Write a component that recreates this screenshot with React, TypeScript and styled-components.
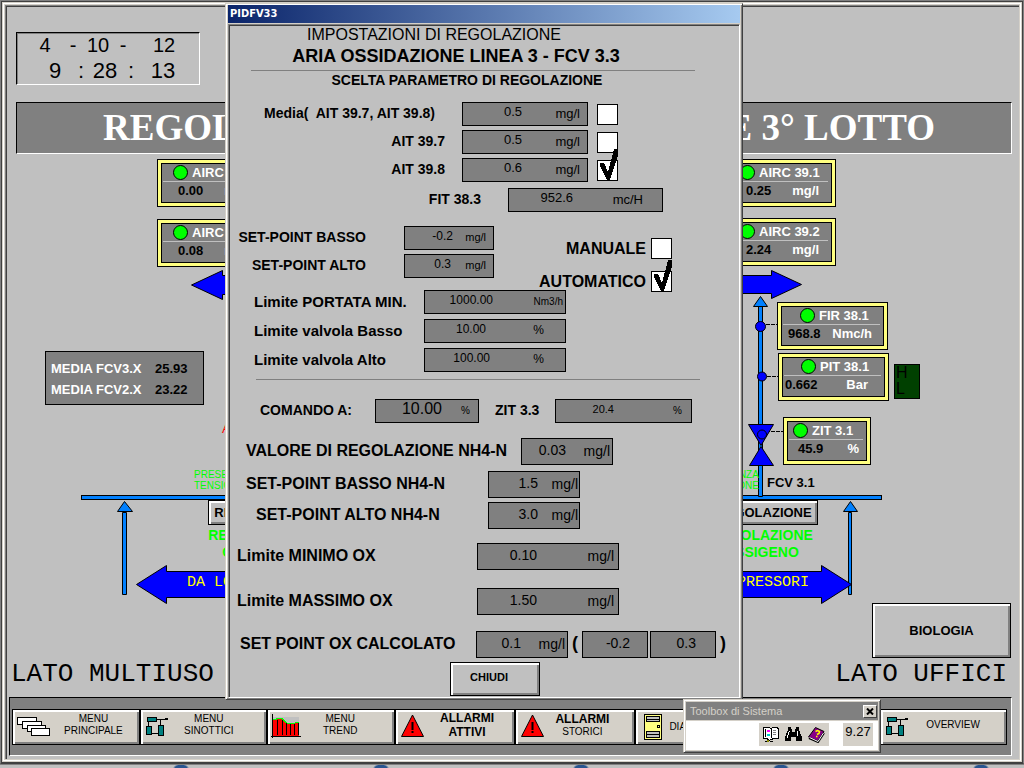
import React, { useId } from "react";
import styled, { createGlobalStyle, css } from "styled-components";

const face = "#c0c0c0";
const panel = "#808080";
const chrome = "#d4d0c8";
const dark = "#404040";
const pipe = "#0080ff";
const lime = "#00ff00";

const GlobalStyle = createGlobalStyle`
  * { box-sizing: border-box; }
  body {
    margin: 0;
    background: ${face};
    color: #000;
    font-family: "Liberation Sans", Arial, sans-serif;
    font-size: 13px;
  }
  h1, h2, h3, p { margin: 0; }
  svg { display: block; }
`;

/* ---------- application frame ---------- */

const Screen = styled.div`
  position: relative;
  display: flex;
  flex-direction: column;
  min-height: 100vh;
  overflow: hidden;
`;

const Frame = styled.div`
  flex: 1;
  display: flex;
  border: 1px solid ${panel};
  border-bottom-color: ${dark};
  background: ${dark};
  padding: 1px 1px 1px 1px;
`;

const FrameLight = styled.div`
  flex: 1;
  display: flex;
  background: #fff;
  border: 1px solid ${chrome};
  padding: 1px;
`;

const Page = styled.main`
  flex: 1;
  display: flex;
  flex-direction: column;
  min-width: 0;
  background: ${face};
  border: 1px solid ${chrome};
  box-shadow: inset 1px 1px ${panel}, inset 2px 2px ${dark};
  padding: 2px 0 0 2px;
`;

const BottomStrip = styled.div`
  height: 4px;
  border-top: 1px solid ${panel};
  background: radial-gradient(ellipse 8px 4px at 181px 3px, #2a5590 70%, transparent) 0 0 / 200px 4px ${face};
`;

/* ---------- header ---------- */

const Clock = styled.div`
  align-self: flex-start;
  width: 184px;
  margin: 25px 0 17px 9px;
  border: 1px solid #000;
  border-right-color: #fff;
  border-bottom-color: #fff;
  box-shadow: inset 1px 1px ${panel};
`;

const ClockRow = styled.div<{ $time?: boolean }>`
  display: grid;
  grid-template-columns: ${(p) => (p.$time ? "40px 12px 36px 16px 48px" : "40px 16px 34px 16px 66px")};
  padding-left: ${(p) => (p.$time ? 18 : 8)}px;
  font-size: ${(p) => (p.$time ? 22 : 20)}px;
  line-height: ${(p) => (p.$time ? 26 : 25)}px;
  text-align: center;
`;

const Banner = styled.h1`
  display: flex;
  justify-content: space-between;
  margin: 0 7px 0 9px;
  padding: 0 76px 0 86px;
  background: ${panel};
  border: 1px solid #000;
  border-right-color: #fff;
  border-bottom-color: #fff;
  color: #fff;
  font: bold 37px/50px "Liberation Serif", "Times New Roman", serif;
`;

/* ---------- synoptic canvas ---------- */

const Mimic = styled.section`
  position: relative;
  flex: 1;
  display: flex;
  justify-content: space-between;
  min-height: 504px;
`;

const MainPipe = styled.div`
  position: absolute;
  top: 341px;
  left: 74px;
  right: 137px;
  height: 5px;
  background: ${pipe};
  border: 1px solid #000;
`;

const Side = styled.div`
  position: relative;
  width: 283px;
`;

const Drawing = styled.svg`
  position: absolute;
  inset: 0;
  overflow: visible;
`;

const Pinned = styled.div<{ $x: number; $y: number }>`
  position: absolute;
  left: ${(p) => p.$x}px;
  top: ${(p) => p.$y}px;
  white-space: nowrap;
`;

const TagBox = styled.div<{ $w: number }>`
  width: ${(p) => p.$w}px;
  height: 48px;
  border: 1px solid #000;
  background: #ffff80;
  padding: 3px;
  font-weight: bold;
`;

const TagFace = styled.div`
  height: 40px;
  border: 1px solid #000;
  background: ${panel};
`;

const TagHead = styled.div<{ $pad: number }>`
  display: flex;
  align-items: center;
  gap: 4px;
  height: 18px;
  margin: 0 3px 0 1px;
  padding-left: ${(p) => p.$pad}px;
  border-bottom: 1px solid ${face};
  color: #fff;
`;

const Lamp = styled.i`
  width: 15px;
  height: 15px;
  border-radius: 50%;
  border: 1px solid #000;
  background: ${lime};
`;

const TagRow = styled.div<{ $l: number; $r: number }>`
  display: flex;
  justify-content: space-between;
  padding: 0 ${(p) => p.$r}px 0 ${(p) => p.$l}px;
  line-height: 18px;
`;

const TagUnit = styled.span`
  color: #fff;
`;

const MediaBox = styled.dl`
  display: grid;
  grid-template-columns: 104px auto;
  width: 159px;
  height: 54px;
  margin: 0;
  padding: 6px 5px;
  align-content: start;
  border: 1px solid #000;
  background: ${panel};
  font-weight: bold;
  line-height: 21px;
`;

const MediaName = styled.dt`
  color: #fff;
`;

const MediaValue = styled.dd`
  margin: 0;
`;

const Alarm = styled.span`
  color: #f00;
  font-size: 13px;
`;

const Power = styled.p<{ $right?: boolean }>`
  color: ${lime};
  font-size: 10px;
  line-height: 11px;
  text-align: ${(p) => (p.$right ? "right" : "left")};
`;

const Mode = styled.p`
  width: 103px;
  color: ${lime};
  font-size: 14px;
  font-weight: bold;
  line-height: 17px;
  text-align: center;
`;

const FlowText = styled.span`
  color: #ff0;
  font: 15px/18px "Liberation Mono", "Courier New", monospace;
`;

const ValveName = styled.span`
  font-weight: bold;
`;

const Limits = styled.div`
  width: 26px;
  height: 35px;
  padding-left: 1px;
  border: 1px solid #000;
  background: #004000;
  font-size: 16px;
  line-height: 16px;
`;

const bevel = css`
  border: 1px solid #000;
  box-shadow: inset 2px 2px #fff, inset -2px -2px ${panel};
  color: #000;
  font-family: inherit;
`;

const PlantButton = styled.button<{ $w: number; $h: number }>`
  ${bevel}
  width: ${(p) => p.$w}px;
  height: ${(p) => p.$h}px;
  padding: 0;
  background: ${face};
  font-size: 13px;
  font-weight: bold;
`;

const Captions = styled.div`
  display: flex;
  justify-content: space-between;
  padding: 0 12px 9px 4px;
  font: 26px/28px "Liberation Mono", "Courier New", monospace;
`;

/* ---------- menu bar ---------- */

const MenuBar = styled.nav`
  margin: 0 7px 3px 2px;
  padding: 11px 4px 10px 2px;
  background: ${panel};
  border: 1px solid #000;
  border-right-color: #fff;
  border-bottom-color: #fff;
`;

const MenuRow = styled.div`
  display: flex;
  gap: 2px;
  padding: 1px;
  background: #000;
`;

const MenuButton = styled.button<{ $grow: number }>`
  flex: ${(p) => p.$grow} 1 0;
  display: flex;
  align-items: center;
  min-width: 0;
  height: 34px;
  padding: 0 2px 0 3px;
  border: 0;
  box-shadow: inset 2px 2px #fff, inset -2px -2px ${panel};
  background: ${chrome};
  color: #000;
  font: 10px/12px "Liberation Sans", Arial, sans-serif;
`;

const MenuText = styled.span<{ $end: number }>`
  flex: 1;
  padding: 0 ${(p) => p.$end}px 4px 0;
  text-align: center;
`;

const Line = styled.span`
  display: block;
`;

const Strong = styled.strong`
  display: block;
  font-size: 12px;
  line-height: 14px;
`;

/* ---------- dialog ---------- */

const Dialog = styled.section`
  position: absolute;
  top: 3px;
  left: calc(50% - 287px);
  width: 518px;
  padding: 1px 2px;
  border: 1px solid ${chrome};
  border-right-color: ${dark};
  border-bottom-color: ${dark};
  box-shadow: inset 1px 1px #fff, inset -1px -1px ${panel};
  background: ${chrome};
`;

const TitleBar = styled.h2`
  height: 18px;
  padding-left: 2px;
  background: linear-gradient(90deg, #0a246a, #a6caf0);
  color: #fff;
  font: bold 11px/18px "DejaVu Sans Condensed", "DejaVu Sans", sans-serif;
`;

const DialogBody = styled.form`
  margin-top: 1px;
  background: ${face};
  border: 1px solid ${panel};
  border-right-color: #fff;
  border-bottom-color: #fff;
  box-shadow: inset 1px 1px ${dark};
  padding: 1px;
`;

const Heading = styled.h3<{ $size: number; $lh: number; $end: number; $bold?: boolean }>`
  padding-right: ${(p) => p.$end}px;
  font-size: ${(p) => p.$size}px;
  line-height: ${(p) => p.$lh}px;
  font-weight: ${(p) => (p.$bold ? "bold" : "normal")};
  text-align: center;
  white-space: nowrap;
`;

const Rule = styled.hr<{ $top: number; $left: number }>`
  width: 444px;
  height: 1px;
  margin: ${(p) => p.$top}px 0 0 ${(p) => p.$left}px;
  border: 0;
  background: ${panel};
`;

const Row = styled.div<{ $top?: number }>`
  display: flex;
  align-items: center;
  margin-top: ${(p) => p.$top ?? 4}px;
`;

const Label = styled.label<{ $w: number; $start?: number; $end?: number; $size?: number }>`
  flex: none;
  width: ${(p) => p.$w}px;
  padding: 0 ${(p) => p.$end ?? 0}px 2px ${(p) => p.$start ?? 0}px;
  text-align: ${(p) => (p.$end ? "right" : "left")};
  font-size: ${(p) => p.$size ?? 14}px;
  font-weight: bold;
  white-space: pre;
`;

const ModeLabel = styled(Label)`
  padding-bottom: 0;
`;

const FieldBox = styled.div<{ $w: number; $h: number }>`
  flex: none;
  display: flex;
  align-items: center;
  justify-content: space-between;
  width: ${(p) => p.$w}px;
  height: ${(p) => p.$h}px;
  border: 1px solid #000;
  background: ${panel};
`;

const valueStyle = css<{ $v: number; $size: number }>`
  display: block;
  width: ${(p) => p.$v}px;
  padding: 0 0 4px;
  border: 0;
  background: none;
  color: #000;
  font: ${(p) => p.$size}px/18px "Liberation Sans", Arial, sans-serif;
  text-align: right;
`;

const ValueInput = styled.input<{ $v: number; $size: number }>`
  ${valueStyle}
`;

const ValueOutput = styled.output<{ $v: number; $size: number }>`
  ${valueStyle}
`;

const Unit = styled.span<{ $p: number; $size: number }>`
  padding: 0 ${(p) => p.$p}px 2px 0;
  font-size: ${(p) => p.$size}px;
`;

const Split = styled.div`
  display: flex;
  margin-top: 14px;
`;

const Column = styled.div<{ $top?: number }>`
  padding-top: ${(p) => p.$top ?? 0}px;
`;

const TickWrap = styled.span<{ $left: number }>`
  position: relative;
  display: block;
  margin-left: ${(p) => p.$left}px;
`;

const TickInput = styled.input`
  appearance: none;
  display: block;
  width: 21px;
  height: 21px;
  margin: 0;
  border: 1px solid #000;
  background: #fff;
`;

const TickMark = styled.svg`
  position: absolute;
  left: 0;
  bottom: 0;
  pointer-events: none;
`;

const Paren = styled.span`
  width: 14px;
  padding-bottom: 2px;
  text-align: center;
  font-size: 18px;
  font-weight: bold;
`;

const Gap = styled.span`
  width: 2px;
`;

const CloseButton = styled.button`
  ${bevel}
  display: block;
  width: 90px;
  height: 34px;
  margin: 4px 0 0 220px;
  padding: 0 12px 4px 0;
  background: ${face};
  font-size: 11px;
  font-weight: bold;
`;

/* ---------- system toolbox ---------- */

const Toolbox = styled.aside`
  position: absolute;
  right: 143px;
  bottom: 15px;
  width: 198px;
  border: 1px solid ${chrome};
  border-right-color: ${dark};
  border-bottom-color: ${dark};
  box-shadow: inset 1px 1px #fff, inset -1px -1px ${panel};
  background: ${chrome};
  padding: 2px;
`;

const ToolTitle = styled.div`
  display: flex;
  align-items: center;
  justify-content: space-between;
  height: 18px;
  padding: 0 1px 0 4px;
  background: ${panel};
  color: ${chrome};
  font: 11px/18px "Liberation Sans", Arial, sans-serif;
`;

const ToolClose = styled.button`
  display: grid;
  place-items: center;
  width: 14px;
  height: 13px;
  padding: 0;
  border: 1px solid #fff;
  border-right-color: ${dark};
  border-bottom-color: ${dark};
  background: ${chrome};
`;

const ToolBody = styled.div`
  display: flex;
  justify-content: flex-end;
  gap: 14px;
  margin-top: 1px;
  padding: 2px 5px 4px;
  background: #fff;
`;

const ToolIcons = styled.div`
  display: flex;
  align-items: center;
  gap: 6px;
  height: 23px;
  padding: 0 4px;
  background: ${chrome};
`;

const ToolTime = styled.time`
  width: 30px;
  height: 23px;
  background: ${chrome};
  font-size: 13px;
  line-height: 18px;
  text-align: center;
`;

/* ---------- pieces ---------- */

type FieldProps = {
  id?: string;
  w: number;
  h?: number;
  v: number;
  p?: number;
  value: string;
  unit?: string;
  size?: number;
  unitSize?: number;
  edit?: boolean;
  name?: string;
};

function Field({ id, w, h = 24, v, p = 0, value, unit, size = 13, unitSize = 13, edit, name }: FieldProps) {
  return (
    <FieldBox $w={w} $h={h}>
      {edit ? (
        <ValueInput id={id} $v={v} $size={size} defaultValue={value} aria-label={name} />
      ) : (
        <ValueOutput id={id} $v={v} $size={size} aria-label={name}>{value}</ValueOutput>
      )}
      {unit && <Unit $p={p} $size={unitSize}>{unit}</Unit>}
    </FieldBox>
  );
}

type LineProps = FieldProps & {
  label: string;
  lw: number;
  start?: number;
  end?: number;
  labelSize?: number;
  top?: number;
  tick?: boolean;
  children?: React.ReactNode;
};

function Tick({ id, on, name, left = 9 }: { id?: string; on?: boolean; name?: string; left?: number }) {
  return (
    <TickWrap $left={left}>
      <TickInput id={id} type="checkbox" defaultChecked={on} aria-label={name} />
      {on && (
        <TickMark width="22" height="34" viewBox="0 0 22 34" shapeRendering="crispEdges">
          <path d="M3 16h4l4 9 6-23h4v6l-8 25h-3L3 19z" />
        </TickMark>
      )}
    </TickWrap>
  );
}

function FieldLine({ label, lw, start, end, labelSize, top, tick, children, ...field }: LineProps) {
  const id = useId();
  return (
    <Row $top={top}>
      <Label htmlFor={id} $w={lw} $start={start} $end={end} $size={labelSize}>{label}</Label>
      <Field id={id} {...field} />
      {tick !== undefined && <Tick on={tick} name={label} />}
      {children}
    </Row>
  );
}

function ModeLine({ label, on, top }: { label: string; on?: boolean; top: number }) {
  const id = useId();
  return (
    <Row $top={top}>
      <ModeLabel htmlFor={id} $w={157} $end={5} $size={16}>{label}</ModeLabel>
      <Tick id={id} on={on} left={0} />
    </Row>
  );
}

type TagProps = {
  x: number; y: number; w?: number; name: string; value: string; unit: string;
  head: number; l: number; r: number;
};

function Tag({ x, y, w = 111, name, value, unit, head, l, r }: TagProps) {
  return (
    <Pinned $x={x} $y={y}>
      <TagBox $w={w}>
        <TagFace>
          <TagHead $pad={head}><Lamp />{name}</TagHead>
          <TagRow $l={l} $r={r}><span>{value}</span><TagUnit>{unit}</TagUnit></TagRow>
        </TagFace>
      </TagBox>
    </Pinned>
  );
}

const PagesIcon = () => (
  <svg width="34" height="26" viewBox="0 0 34 26" fill="#fff" stroke="#000" shapeRendering="crispEdges">
    <path d="M1.500 3.500h19v7h-19z" />
    <path d="M6.500 7.500h19v7h-19z" />
    <path d="M11.500 11.500h18v6h-18z" />
    <path d="M15.500 14.500h18v7h-18z" />
  </svg>
);

const PlantIcon = () => (
  <svg width="28" height="26" viewBox="0 0 28 26" fill="#008080" stroke="#000" shapeRendering="crispEdges">
    <path d="M11 5.500h11M16.500 5v8M4.500 8v4M6 19.500h9" fill="none" />
    <path d="M3.500 3.500h9v4h-9zM2.500 12.500h5v8h-5zM14.500 11.500h5v10h-5z" />
    <path d="M21 4h3v2h-3z" fill="#000" stroke="none" />
  </svg>
);

const TrendIcon = () => (
  <svg width="34" height="28" viewBox="0 0 34 28" shapeRendering="crispEdges">
    <path d="M2 4h26v8H2z" fill={face} />
    <path d="M2 7l6-2 4 2 3 3h6l5-1h2v14H2z" fill="#f00" />
    <path d="M2 6.500h3l1-1h5l3 3 2 2h7l2-1h3" fill="none" stroke={lime} strokeWidth="1" />
    <path d="M6.500 7v15M11.500 7v15M15.500 10v12M19.500 11v11M23.500 11v11M27.500 10v12" stroke="#000" />
    <path d="M1.500 1v24M0 23.500h30" stroke="#000" />
  </svg>
);

const WarnIcon = () => (
  <svg width="30" height="28" viewBox="0 0 30 28">
    <path d="M13.500 2L24.500 23.500H2.500z" fill="#f00" stroke="#000" />
    <path d="M12.500 9h2v8h-2zM12.500 18h2v2h-2z" />
  </svg>
);

const CabinetIcon = () => (
  <svg width="30" height="28" viewBox="0 0 30 28" fill="#ffff80" stroke="#000" shapeRendering="crispEdges">
    <path d="M5.500 1.500h17v25h-17z" />
    <path d="M7.500 3.500h13v5h-13zM7.500 18.500h13v6h-13z" fill={face} />
    <path d="M8 6.500h12M8 21.500h12" />
    <path d="M18.500 12.500h2v2h-2z" />
  </svg>
);

const DocsIcon = () => (
  <svg width="16" height="17" viewBox="0 0 16 17" shapeRendering="crispEdges">
    <path d="M.5 1.500h6l1.500 1 1.500-1h5l1 2v9h-5l-2 1-3 1-1-2h-4z" fill="#fff" stroke="#000" />
    <path d="M8.500 2v10M2.500 3v8" stroke="#000" />
    <path d="M4 4h3v2H4z" fill="#f0f" /><path d="M4 8h3v2H4z" fill="#0cc" />
    <path d="M10 4h3M10 6h3M10 8h3" stroke="#808080" />
    <path d="M4 14h2v2H4z" fill="#880" /><path d="M2 15.500h2M7 15.500h3" stroke="#000" />
  </svg>
);

const BinocularsIcon = () => (
  <svg width="17" height="15" viewBox="0 0 17 15" shapeRendering="crispEdges">
    <path d="M3 0h3v2h1v3h3V2h1V0h3v3l3 7v4h-6v-4H6v4H0v-4l3-7z" />
    <path d="M4.500 4L2 11M12.500 4v5" stroke="#fff" />
  </svg>
);

const BookIcon = () => (
  <svg width="17" height="16" viewBox="0 0 17 16">
    <path d="M7.500.5l8.500 4-6 9.500-9.500-4z" fill="#808" stroke="#000" />
    <path d="M1 11l9 4 6-9" fill="none" stroke="#000" strokeWidth="2" />
    <path d="M1.500 10.500l8.500 4 5.500-8.500" fill="none" stroke="#fff" />
    <path d="M7.500 4.500l2-1 2 1-.5 2-2 1M8 9.500h1.500" fill="none" stroke="#ff0" strokeWidth="1.500" />
  </svg>
);

function LeftSide() {
  return (
    <Side>
      <Drawing width="283" height="500" viewBox="7 154 283 500" stroke="#000" aria-hidden="true">
        <path d="M191.500 285L222.500 270.500V275.500H290V294.500H222.500V299.500Z" fill="#00f" />
        <path d="M122.500 512.500h4v82h-4z" fill={pipe} />
        <path d="M124.500 501.500L132.500 511.500H117.500Z" fill={pipe} />
        <path d="M136.500 584.500L166.500 565.500V571.500H290V597.500H166.500V603.500Z" fill="#00f" />
      </Drawing>
      <Tag x={150} y={5} name="AIRC 39.3" value="0.00" unit="mg/l" head={10} l={16} r={12} />
      <Tag x={150} y={65} name="AIRC 39.4" value="0.08" unit="mg/l" head={10} l={16} r={12} />
      <Pinned $x={38} $y={197}>
        <MediaBox>
          <MediaName>MEDIA FCV3.X</MediaName><MediaValue>25.93</MediaValue>
          <MediaName>MEDIA FCV2.X</MediaName><MediaValue>23.22</MediaValue>
        </MediaBox>
      </Pinned>
      <Pinned $x={215} $y={267}><Alarm>ALLARME</Alarm></Pinned>
      <Pinned $x={187} $y={315}><Power>PRESENZA<br />TENSIONE</Power></Pinned>
      <Pinned $x={201} $y={346}><PlantButton $w={108} $h={25}>REGOLAZIONE</PlantButton></Pinned>
      <Pinned $x={201} $y={373}><Mode>REGOLAZIONE<br />OSSIGENO</Mode></Pinned>
      <Pinned $x={180} $y={420}><FlowText>DA LOTTO</FlowText></Pinned>
    </Side>
  );
}

function RightSide() {
  return (
    <Side>
      <Drawing width="283" height="500" viewBox="736 154 283 500" stroke="#000" aria-hidden="true">
        <path d="M730 275.500H771.500V270.500L801.500 284.500L771.500 298.500V293.500H730Z" fill="#00f" />
        <path d="M848.500 512.500h3v82h-3z" fill={pipe} />
        <path d="M850.500 501.500L857.500 511.500H843.500Z" fill={pipe} />
        <path d="M758.500 306.500h4v190h-4z" fill={pipe} />
        <path d="M760.500 296.500L767.500 306.500H753.500Z" fill={pipe} />
        <path d="M766 324.500h12M767 376.500h12M766 431.500h18" strokeDasharray="4 1" />
        <path d="M748.500 424.500H773.500L761 445.500ZM749.500 465.500H773.500L761 446.500Z" fill="#00f" />
        <circle cx="760.500" cy="326.500" r="5" fill="#00f" />
        <circle cx="762" cy="376.500" r="4.500" fill="#00f" />
        <circle cx="762" cy="434.500" r="4.500" fill="#00f" />
        <path d="M730 571.500H821.500V565.500L851.500 584.500L821.500 603.500V597.500H730Z" fill="#00f" />
      </Drawing>
      <Tag x={-11} y={5} name="AIRC 39.1" value="0.25" unit="mg/l" head={9} l={16} r={12} />
      <Tag x={-11} y={64} name="AIRC 39.2" value="2.24" unit="mg/l" head={9} l={16} r={12} />
      <Tag x={41} y={148} name="FIR 38.1" value="968.8" unit="Nmc/h" head={17} l={6} r={11} />
      <Tag x={42} y={199} name="PIT 38.1" value="0.662" unit="Bar" head={17} l={2} r={16} />
      <Tag x={47} y={263} w={88} name="ZIT 3.1" value="45.9" unit="%" head={4} l={10} r={7} />
      <Pinned $x={158} $y={210}><Limits>H<br />L</Limits></Pinned>
      <Pinned $x={-31} $y={315}><Power $right>PRESENZA<br />TENSIONE</Power></Pinned>
      <Pinned $x={31} $y={321}><ValveName>FCV 3.1</ValveName></Pinned>
      <Pinned $x={-26} $y={346}><PlantButton $w={108} $h={25}>REGOLAZIONE</PlantButton></Pinned>
      <Pinned $x={-26} $y={373}><Mode>REGOLAZIONE<br />OSSIGENO</Mode></Pinned>
      <Pinned $x={-53} $y={420}><FlowText>DA COMPRESSORI</FlowText></Pinned>
      <Pinned $x={136} $y={449}><PlantButton $w={139} $h={55}>BIOLOGIA</PlantButton></Pinned>
    </Side>
  );
}

function SettingsDialog() {
  const zit = useId();
  return (
    <Dialog role="dialog" aria-label="PIDFV33">
      <TitleBar>PIDFV33</TitleBar>
      <DialogBody onSubmit={(e) => e.preventDefault()}>
        <Heading $size={16} $lh={18} $end={100}>IMPOSTAZIONI DI REGOLAZIONE</Heading>
        <Heading $size={18} $lh={24} $end={56} $bold>ARIA OSSIDAZIONE LINEA 3 - FCV 3.3</Heading>
        <Rule $top={2} $left={21} />
        <Heading $size={14} $lh={18} $end={34} $bold>SCELTA PARAMETRO DI REGOLAZIONE</Heading>

        <FieldLine top={13} label="Media(  AIT 39.7, AIT 39.8)" lw={232} end={27} w={126} v={59} p={7} value="0.5" unit="mg/l" tick={false} />
        <FieldLine label="AIT 39.7" lw={232} end={17} w={126} v={59} p={7} value="0.5" unit="mg/l" tick={false} />
        <FieldLine label="AIT 39.8" lw={232} end={17} w={126} v={59} p={7} value="0.6" unit="mg/l" tick />
        <FieldLine top={6} label="FIT 38.3" lw={278} end={27} w={155} v={64} p={19} value="952.6" unit="mc/H" />

        <Split>
          <Column>
            <FieldLine top={0} label="SET-POINT BASSO" lw={174} end={38} w={90} v={48} p={7} value="-0.2" unit="mg/l" size={12} unitSize={11} edit />
            <FieldLine label="SET-POINT ALTO" lw={174} end={38} w={90} v={46} p={7} value="0.3" unit="mg/l" size={12} unitSize={11} edit />
          </Column>
          <Column $top={12}>
            <ModeLine top={0} label="MANUALE" />
            <ModeLine top={12} label="AUTOMATICO" on />
          </Column>
        </Split>
        <FieldLine top={-2} label="Limite PORTATA MIN." lw={194} start={24} labelSize={15} w={142} v={68} p={2} value="1000.00" unit="Nm3/h" size={12} unitSize={10} edit />
        <FieldLine top={5} label="Limite valvola Basso" lw={194} start={24} labelSize={15} w={142} v={61} p={21} value="10.00" unit="%" size={12} unitSize={12} edit />
        <FieldLine top={5} label="Limite valvola Alto" lw={194} start={24} labelSize={15} w={142} v={65} p={21} value="100.00" unit="%" size={12} unitSize={12} edit />
        <Rule $top={7} $left={26} />

        <FieldLine top={19} label="COMANDO A:" lw={145} start={30} w={104} v={66} p={8} value="10.00" unit="%" size={16} unitSize={10} edit>
          <Label htmlFor={zit} $w={76} $start={16}>ZIT 3.3</Label>
          <Field id={zit} w={137} v={58} p={9} value="20.4" unit="%" size={11} unitSize={10} />
        </FieldLine>

        <FieldLine top={15} label="VALORE DI REGOLAZIONE NH4-N" lw={291} start={16} labelSize={16} w={92} h={27} v={44} p={2} value="0.03" unit="mg/l" size={14} unitSize={14} />
        <FieldLine top={6} label="SET-POINT BASSO NH4-N" lw={258} start={16} labelSize={16} w={92} h={27} v={49} p={1} value="1.5" unit="mg/l" size={14} unitSize={14} edit />
        <FieldLine label="SET-POINT ALTO NH4-N" lw={258} start={26} labelSize={16} w={92} h={27} v={49} p={1} value="3.0" unit="mg/l" size={14} unitSize={14} edit />
        <FieldLine top={14} label="Limite MINIMO OX" lw={247} start={7} labelSize={16} w={142} h={27} v={59} p={4} value="0.10" unit="mg/l" size={14} unitSize={14} edit />
        <FieldLine top={18} label="Limite MASSIMO OX" lw={247} start={7} labelSize={16} w={142} h={27} v={59} p={4} value="1.50" unit="mg/l" size={14} unitSize={14} edit />
        <FieldLine top={16} label="SET POINT OX CALCOLATO" lw={246} start={10} labelSize={16} w={92} h={27} v={44} p={2} value="0.1" unit="mg/l" size={14} unitSize={14}>
          <Paren>(</Paren>
          <Field w={66} h={27} v={47} value="-0.2" size={14} name="Minimo" />
          <Gap />
          <Field w={66} h={27} v={45} value="0.3" size={14} name="Massimo" />
          <Paren>)</Paren>
        </FieldLine>
        <CloseButton type="button">CHIUDI</CloseButton>
      </DialogBody>
    </Dialog>
  );
}

export default function App() {
  return (
    <>
      <GlobalStyle />
      <Screen>
        <Frame>
          <FrameLight>
            <Page>
              <Clock>
                <ClockRow><span>4</span><span>-</span><span>10</span><span>-</span><span>12</span></ClockRow>
                <ClockRow $time><span>9</span><span>:</span><span>28</span><span>:</span><span>13</span></ClockRow>
              </Clock>
              <Banner><span>REGOLAZIONE</span><span>LINEE 3° LOTTO</span></Banner>
              <Mimic>
                <MainPipe />
                <LeftSide />
                <RightSide />
              </Mimic>
              <Captions><span>LATO MULTIUSO</span><span>LATO UFFICI</span></Captions>
              <MenuBar>
                <MenuRow>
                  <MenuButton $grow={121}><PagesIcon /><MenuText $end={0}><Line>MENU</Line><Line>PRINCIPALE</Line></MenuText></MenuButton>
                  <MenuButton $grow={120}><PlantIcon /><MenuText $end={18}><Line>MENU</Line><Line>SINOTTICI</Line></MenuText></MenuButton>
                  <MenuButton $grow={121}><TrendIcon /><MenuText $end={16}><Line>MENU</Line><Line>TREND</Line></MenuText></MenuButton>
                  <MenuButton $grow={113}><WarnIcon /><MenuText $end={6}><Strong>ALLARMI</Strong><Strong>ATTIVI</Strong></MenuText></MenuButton>
                  <MenuButton $grow={114}><WarnIcon /><MenuText $end={16}><Strong>ALLARMI</Strong><Line>STORICI</Line></MenuText></MenuButton>
                  <MenuButton $grow={238}><CabinetIcon /><Line>DIAGNOSTICA</Line></MenuButton>
                  <MenuButton $grow={120}><PlantIcon /><MenuText $end={10}><Line>OVERVIEW</Line></MenuText></MenuButton>
                </MenuRow>
              </MenuBar>
            </Page>
          </FrameLight>
        </Frame>
        <BottomStrip />
        <SettingsDialog />
        <Toolbox>
          <ToolTitle>
            Toolbox di Sistema
            <ToolClose aria-label="Chiudi toolbox">
              <svg width="8" height="7" viewBox="0 0 8 7" stroke="#000" strokeWidth="2"><path d="M1 .5l6 6M7 .5l-6 6" /></svg>
            </ToolClose>
          </ToolTitle>
          <ToolBody>
            <ToolIcons><DocsIcon /><BinocularsIcon /><BookIcon /></ToolIcons>
            <ToolTime>9.27</ToolTime>
          </ToolBody>
        </Toolbox>
      </Screen>
    </>
  );
}
